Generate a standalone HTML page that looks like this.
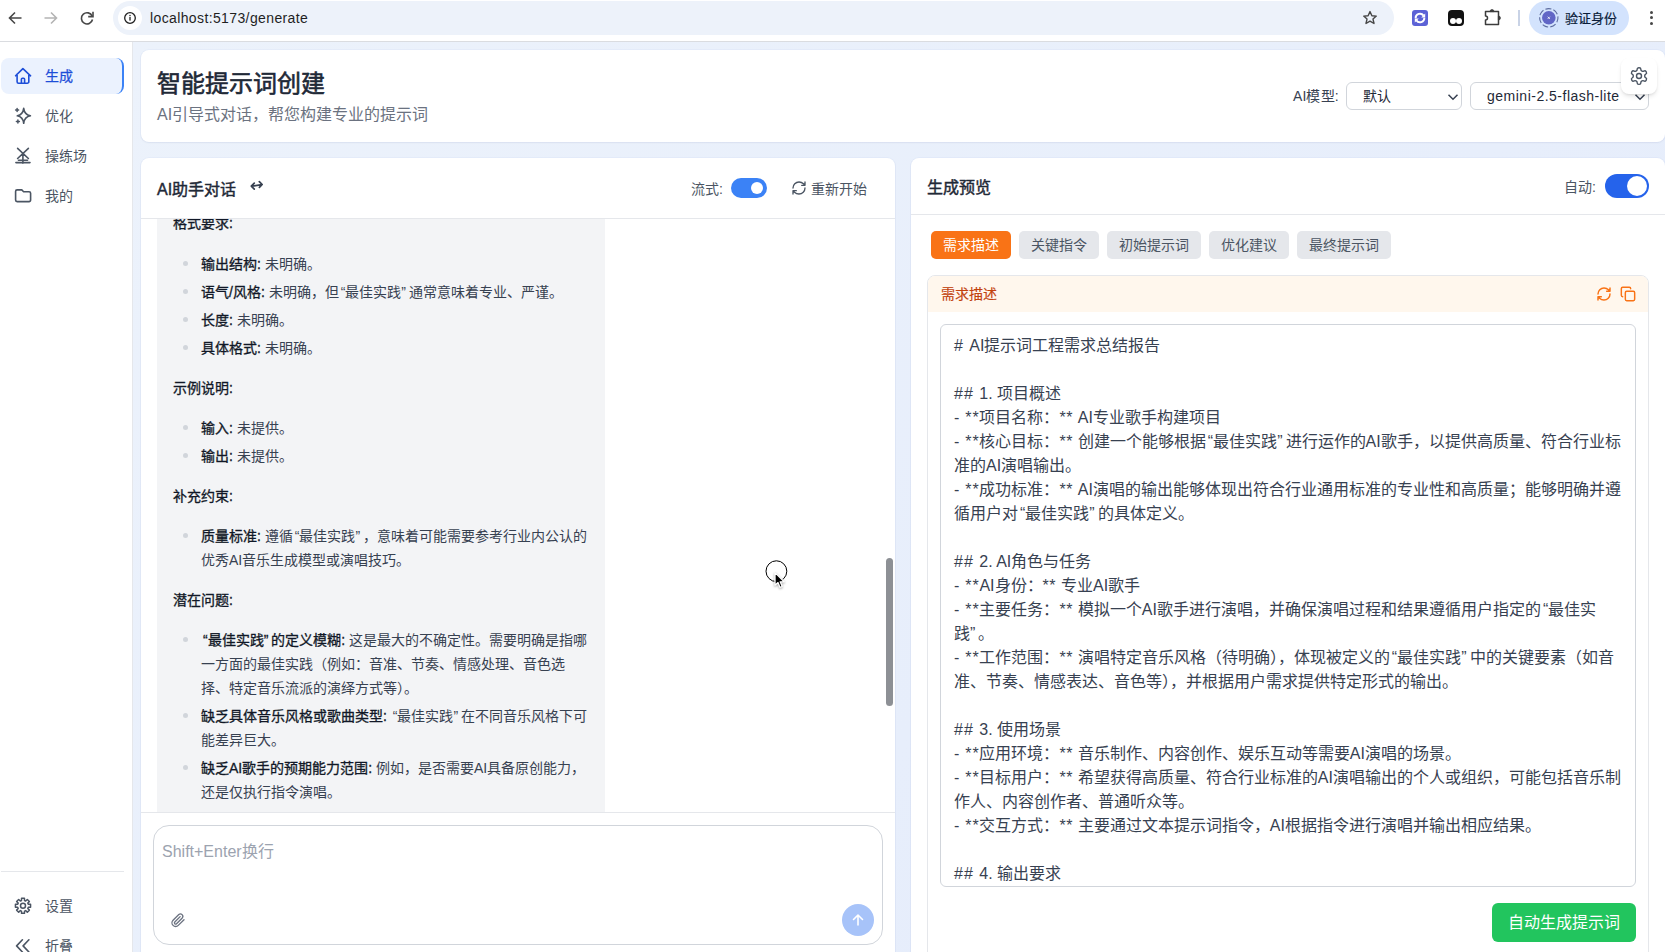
<!DOCTYPE html>
<html lang="zh-CN">
<head>
<meta charset="utf-8">
<style>
*{box-sizing:border-box;margin:0;padding:0}
html,body{width:1665px;height:952px;overflow:hidden;background:#fff}
body{font-family:"Liberation Sans",sans-serif;color:#1f2937;position:relative}
.a{position:absolute}
svg{display:block;position:absolute;overflow:visible}
/* chrome */
#chrome{position:absolute;left:0;top:0;width:1665px;height:42px;background:#fff;border-bottom:1px solid #dadce0}
#url{position:absolute;left:113px;top:1px;width:1281px;height:34px;border-radius:17px;background:#edf2fa}
#urltxt{position:absolute;left:150px;top:9px;font-size:14px;color:#1f1f1f;line-height:18px;white-space:nowrap;letter-spacing:0.38px}
#prof{position:absolute;left:1529px;top:1px;width:100px;height:34px;border-radius:17px;background:#d3e3fd}
/* sidebar */
#side{position:absolute;left:0;top:42px;width:133px;height:910px;background:#fff;border-right:1px solid #e5e7eb}
.nav{position:absolute;left:1px;width:123px;height:36px;border-radius:8px;font-size:14px;color:#4b5563;line-height:36px}
.nav .t{position:absolute;left:44px;top:0}
.nav svg{left:14px;top:10px}
.nav.act{background:#ebf2fe;color:#1d4ed8;border-right:2px solid #3b82f6;-webkit-text-stroke:0.25px #1d4ed8}
/* main */
#main{position:absolute;left:133px;top:42px;width:1532px;height:910px;background:linear-gradient(135deg,#ecf2fb 0%,#e7eefb 60%,#e4ebfb 100%)}
.card{position:absolute;background:#fff;border-radius:8px;box-shadow:0 1px 2px rgba(30,41,59,.05),0 0 0 1px rgba(96,130,210,.05)}
.sel{position:absolute;height:28px;border:1px solid #d1d5db;border-radius:6px;background:#fff;font-size:14px;color:#1f2937;line-height:27px}
.tog{position:absolute;border-radius:999px}
.tog i{position:absolute;background:#fff;border-radius:50%}
.ln{position:absolute;white-space:nowrap;line-height:24px;height:24px}
.bub .ln{font-size:14px;color:#374151}
.bub b{color:#111827;font-weight:400;-webkit-text-stroke:0.3px #111827}
.dot{position:absolute;width:5px;height:5px;border-radius:50%;background:#d1d5db}
.tab{position:absolute;top:231px;height:28px;border-radius:5px;background:#e5e7eb;color:#4b5563;font-size:14px;line-height:27px;padding-top:1px;text-align:center}
.ta .ln{font-size:16px;color:#374151;left:13px;margin-top:1px}
.l1{letter-spacing:0.8px}.l2{letter-spacing:0.5px}.l3{letter-spacing:1px}.ql{margin-left:2px}.qr{margin-right:3px}
</style>
</head>
<body>
<div id="chrome">
  <!-- back -->
  <svg style="left:7px;top:10px" width="16" height="16" viewBox="0 0 16 16"><path d="M14.5 8H2.5M8 2.5L2.5 8L8 13.5" fill="none" stroke="#474747" stroke-width="1.6"/></svg>
  <svg style="left:43px;top:10px" width="16" height="16" viewBox="0 0 16 16"><path d="M1.5 8H13.5M8 2.5L13.5 8L8 13.5" fill="none" stroke="#b4b4b4" stroke-width="1.6"/></svg>
  <svg style="left:79px;top:10px" width="16" height="16" viewBox="0 0 16 16"><path d="M13.2 6.2A5.6 5.6 0 1 0 13.5 9.5" fill="none" stroke="#474747" stroke-width="1.6"/><path d="M14 1.8V6.6H9.2" fill="none" stroke="#474747" stroke-width="1.6"/></svg>
  <div id="url"></div>
  <div class="a" style="left:118px;top:6px;width:24px;height:24px;border-radius:50%;background:#fff"></div>
  <svg style="left:124px;top:12px" width="12" height="12" viewBox="0 0 12 12"><circle cx="6" cy="6" r="5.3" fill="none" stroke="#1f1f1f" stroke-width="1.3"/><rect x="5.35" y="5" width="1.3" height="3.6" fill="#1f1f1f"/><rect x="5.35" y="2.9" width="1.3" height="1.3" fill="#1f1f1f"/></svg>
  <div id="urltxt">localhost:5173/generate</div>
  <svg style="left:1362px;top:10px" width="16" height="16" viewBox="0 0 16 16"><path d="M8 1.6L9.9 5.7L14.3 6.1L11 9.1L12 13.5L8 11.2L4 13.5L5 9.1L1.7 6.1L6.1 5.7Z" fill="none" stroke="#474747" stroke-width="1.4" stroke-linejoin="round"/></svg>
  <!-- ext icons -->
  <div class="a" style="left:1412px;top:10px;width:16px;height:16px;border-radius:3px;background:#5c62d6"></div>
  <svg style="left:1412px;top:10px" width="16" height="16" viewBox="0 0 16 16"><path d="M3.6 8.2A4.4 4.4 0 0 1 11.6 5.6M12.4 7.8A4.4 4.4 0 0 1 4.4 10.4" fill="none" stroke="#fff" stroke-width="1.9"/><path d="M13.2 3.4V7.4H9.2Z M2.8 12.6V8.6H6.8Z" fill="#fff"/></svg>
  <div class="a" style="left:1448px;top:10px;width:16px;height:16px;border-radius:4px;background:#111"></div>
  <div class="a" style="left:1449.5px;top:18.4px;width:6px;height:6px;border-radius:50%;background:#fff"></div>
  <div class="a" style="left:1456.3px;top:18.4px;width:6px;height:6px;border-radius:50%;background:#fff"></div>
  <svg style="left:1482px;top:8px" width="20" height="20" viewBox="0 0 20 20"><path d="M3.5 3.5H16.5V16.5H3.5V12A2 2 0 0 0 3.5 8Z" fill="none" stroke="#3c3c3c" stroke-width="1.5" stroke-linejoin="round"/><path d="M8 3.6A2 2 0 0 1 12 3.6Z M16.4 8A2 2 0 0 1 16.4 12Z" fill="#3c3c3c" stroke="#3c3c3c" stroke-width="0.8"/></svg>
  <div class="a" style="left:1518px;top:10px;width:1.5px;height:16px;background:#c9d3e6"></div>
  <div id="prof"></div>
  <svg style="left:1539px;top:8px" width="20" height="20" viewBox="0 0 20 20"><circle cx="9.8" cy="9.8" r="9.2" fill="none" stroke="#5c6b9e" stroke-width="1.1" stroke-dasharray="6 2.2" transform="rotate(-60 9.8 9.8)"/><circle cx="9.8" cy="9.8" r="6.8" fill="#6166c6"/><path d="M8.7 8.7L10.9 10.9M10.9 8.7L8.7 10.9" stroke="#fff" stroke-width=".8"/></svg>
  <div class="a" style="left:1565px;top:9.5px;font-size:13px;line-height:18px;color:#0b1d3a;-webkit-text-stroke:0.2px #0b1d3a">验证身份</div>
  <div class="a" style="left:1649.5px;top:10.7px;width:3px;height:3px;border-radius:50%;background:#474747"></div><div class="a" style="left:1649.5px;top:16.4px;width:3px;height:3px;border-radius:50%;background:#474747"></div><div class="a" style="left:1649.5px;top:22.1px;width:3px;height:3px;border-radius:50%;background:#474747"></div>
</div>
<div id="side">
  <div class="nav act" style="top:16px">
    <span class="t">生成</span></div>
  <div class="nav" style="top:56px">
    <span class="t">优化</span></div>
  <div class="nav" style="top:96px">
    <span class="t">操练场</span></div>
  <div class="nav" style="top:136px">
    <span class="t">我的</span></div>
  <div class="a" style="left:1px;top:829px;width:123px;height:1px;background:#e5e7eb"></div>
  <div class="nav" style="top:846px">
    <span class="t">设置</span></div>
  <div class="nav" style="top:886px">
    <span class="t">折叠</span></div>
</div>
<svg style="left:0;top:0;z-index:5" width="140" height="952" viewBox="0 0 140 952">
<g fill="none" stroke-width="1.6" stroke-linecap="round" stroke-linejoin="round">
<path stroke="#1d4ed8" d="M15.6 75.8 L22.9 68.6 L30.6 75.8 M17.1 74 V81.7 A1.5 1.5 0 0 0 18.6 83.2 H27.3 A1.5 1.5 0 0 0 28.8 81.7 V74 M21.4 83.2 V79.3 A1 1 0 0 1 22.4 78.3 H23.6 A1 1 0 0 1 24.6 79.3 V83.2"/>
<path stroke="#4b5563" d="M23.7 108.4 Q24.5 114.8 30.4 115.8 Q24.5 116.8 23.7 123.3 Q22.9 116.8 17.3 115.8 Q22.9 114.8 23.7 108.4Z"/>
<path stroke="#4b5563" stroke-width="1.5" d="M17.1 108.6 V111.6 M15.6 110.1 H18.6 M17.9 120.1 V123.1 M16.4 121.6 H19.4"/>
<path stroke="#4b5563" d="M17.6 148.3 L28.4 158.5 M28.4 148.3 L17.6 158.5 M22.9 153.2 V163.2 M18.5 160.2 H27.5 M15.9 162.6 H30"/>
<path stroke="#4b5563" d="M15.6 191.4 A1.5 1.5 0 0 1 17.1 189.9 H21.8 L23.6 191.7 H29.1 A1.5 1.5 0 0 1 30.6 193.2 V200.1 A1.5 1.5 0 0 1 29.1 201.6 H17.1 A1.5 1.5 0 0 1 15.6 200.1 Z"/>
<path stroke="#4b5563" stroke-width="1.5" d="M21.48 900.51 L21.55 898.24 L24.45 898.24 L24.52 900.51 L25.66 900.99 L27.32 899.42 L29.38 901.48 L27.81 903.14 L28.29 904.28 L30.56 904.35 L30.56 907.25 L28.29 907.32 L27.81 908.46 L29.38 910.12 L27.32 912.18 L25.66 910.61 L24.52 911.09 L24.45 913.36 L21.55 913.36 L21.48 911.09 L20.34 910.61 L18.68 912.18 L16.62 910.12 L18.19 908.46 L17.71 907.32 L15.44 907.25 L15.44 904.35 L17.71 904.28 L18.19 903.14 L16.62 901.48 L18.68 899.42 L20.34 900.99Z"/>
<circle stroke="#4b5563" stroke-width="1.5" cx="23" cy="905.8" r="2.5"/>
<path stroke="#4b5563" d="M22.4 939.8 L16.6 945.9 L22.4 952 M28.9 939.8 L23.1 945.9 L28.9 952"/>
</g></svg>
<div id="main"></div>
<!-- header card -->
<div class="card" style="left:141px;top:50px;width:1524px;height:92px"></div>
<div class="a semi" style="left:157px;top:68px;font-size:24px;line-height:32px;color:#1f2937;-webkit-text-stroke:0.6px #1f2937">智能提示词创建</div>
<div class="a" style="left:157px;top:104px;font-size:16px;line-height:22px;color:#6b7280">AI引导式对话，帮您构建专业的提示词</div>
<div class="a" style="left:1293px;top:86px;font-size:14px;line-height:20px;color:#374151;letter-spacing:0.1px">AI模型:</div>
<div class="sel" style="left:1346px;top:82px;width:116px"><span class="a" style="left:16px;top:0">默认</span>
  <svg style="left:100px;top:10px" width="12" height="8" viewBox="0 0 12 8"><path d="M1.5 1.8L6 6.2L10.5 1.8" fill="none" stroke="#374151" stroke-width="1.5"/></svg></div>
<div class="sel" style="left:1470px;top:82px;width:179px"><span class="a" style="left:16px;top:0;letter-spacing:0.5px">gemini-2.5-flash-lite</span>
  <svg style="left:163px;top:10px" width="12" height="8" viewBox="0 0 12 8"><path d="M1.5 1.8L6 6.2L10.5 1.8" fill="none" stroke="#374151" stroke-width="1.5"/></svg></div>
<div class="a" style="left:1621px;top:58px;width:36px;height:36px;border-radius:8px;background:#fff;box-shadow:0 3px 5px -1px rgba(0,0,0,.12),0 1px 2px rgba(0,0,0,.05)"></div>
<svg style="left:1629px;top:66px" width="20" height="20" viewBox="0 0 24 24"><path d="M12.22 2h-.44a2 2 0 0 0-2 2v.18a2 2 0 0 1-1 1.73l-.43.25a2 2 0 0 1-2 0l-.15-.08a2 2 0 0 0-2.730.73l-.22.38a2 2 0 0 0 .73 2.73l.15.1a2 2 0 0 1 1 1.72v.51a2 2 0 0 1-1 1.74l-.15.09a2 2 0 0 0-.73 2.73l.22.38a2 2 0 0 0 2.73.73l.15-.08a2 2 0 0 1 2 0l.43.25a2 2 0 0 1 1 1.73V20a2 2 0 0 0 2 2h.44a2 2 0 0 0 2-2v-.18a2 2 0 0 1 1-1.730l.43-.25a2 2 0 0 1 2 0l.15.08a2 2 0 0 0 2.73-.73l.22-.39a2 2 0 0 0-.73-2.73l-.15-.08a2 2 0 0 1-1-1.74v-.5a2 2 0 0 1 1-1.74l.15-.09a2 2 0 0 0 .73-2.73l-.22-.38a2 2 0 0 0-2.73-.73l-.15.08a2 2 0 0 1-2 0l-.43-.25a2 2 0 0 1-1-1.73V4a2 2 0 0 0-2-2z" fill="none" stroke="#4b5563" stroke-width="1.7" stroke-linejoin="round"/><circle cx="12" cy="12" r="3" fill="none" stroke="#4b5563" stroke-width="1.7"/></svg>

<!-- left card -->
<div class="card" style="left:141px;top:158px;width:754px;height:820px;overflow:hidden">
  <div class="a" style="left:0;top:0;width:754px;height:61px;border-bottom:1px solid #e5e7eb"></div>
  <div class="a" style="left:16px;top:21px;font-size:16px;line-height:22px;color:#1f2937;-webkit-text-stroke:0.45px #1f2937">AI助手对话</div>
  <svg style="left:103px;top:17px" width="26" height="22" viewBox="0 0 26 22"><path d="M8 11.2L18 9.6M10.3 8.1L7.3 11.1L10.3 14.1M15.3 6.6L18.2 9.5L15.4 12.4" fill="none" stroke="#374151" stroke-width="1.7" stroke-linecap="round" stroke-linejoin="round"/></svg>
  <div class="a" style="left:550px;top:21px;font-size:14px;line-height:20px;color:#4b5563">流式:</div>
  <div class="tog" style="left:590px;top:20px;width:36px;height:20px;background:#3b82f6"><i style="left:20px;top:4px;width:12px;height:12px"></i></div>
  <svg style="left:650px;top:22px" width="16" height="16" viewBox="0 0 24 24"><path d="M3 12a9 9 0 0 1 9-9 9.75 9.75 0 0 1 6.74 2.74L21 8M21 3v5h-5M21 12a9 9 0 0 1-9 9 9.75 9.75 0 0 1-6.74-2.74L3 16M8 16H3v5" fill="none" stroke="#4b5563" stroke-width="2" stroke-linecap="round" stroke-linejoin="round"/></svg>
  <div class="a" style="left:670px;top:20.5px;font-size:14px;line-height:20px;color:#4b5563">重新开始</div>
  <!-- scroll area -->
  <div class="a bub" style="left:0;top:61px;width:754px;height:593px;overflow:hidden">
    <div class="a" style="left:16px;top:-40px;width:448px;height:700px;background:#f3f4f6;border-radius:8px"></div>
    <div class="ln" style="left:32px;top:-8px"><b>格式要求:</b></div>
    <div class="dot" style="left:42px;top:42px"></div><div class="ln" style="left:60px;top:33px"><b>输出结构:</b> 未明确。</div>
    <div class="dot" style="left:42px;top:70px"></div><div class="ln" style="left:60px;top:61px"><b>语气/风格:</b> 未明确，但<span class="ql">“</span>最佳实践<span class="qr">”</span>通常意味着专业、严谨。</div>
    <div class="dot" style="left:42px;top:98px"></div><div class="ln" style="left:60px;top:89px"><b>长度:</b> 未明确。</div>
    <div class="dot" style="left:42px;top:126px"></div><div class="ln" style="left:60px;top:117px"><b>具体格式:</b> 未明确。</div>
    <div class="ln" style="left:32px;top:157px"><b>示例说明:</b></div>
    <div class="dot" style="left:42px;top:206px"></div><div class="ln" style="left:60px;top:197px"><b>输入:</b> 未提供。</div>
    <div class="dot" style="left:42px;top:234px"></div><div class="ln" style="left:60px;top:225px"><b>输出:</b> 未提供。</div>
    <div class="ln" style="left:32px;top:265px"><b>补充约束:</b></div>
    <div class="dot" style="left:42px;top:314px"></div><div class="ln" style="left:60px;top:305px"><b>质量标准:</b> 遵循<span class="ql">“</span>最佳实践<span class="qr">”</span>，意味着可能需要参考行业内公认的</div>
    <div class="ln" style="left:60px;top:329px">优秀AI音乐生成模型或演唱技巧。</div>
    <div class="ln" style="left:32px;top:369px"><b>潜在问题:</b></div>
    <div class="dot" style="left:42px;top:418px"></div><div class="ln" style="left:60px;top:409px"><b><span class="ql">“</span>最佳实践<span class="qr">”</span>的定义模糊:</b> 这是最大的不确定性。需要明确是指哪</div>
    <div class="ln" style="left:60px;top:433px">一方面的最佳实践（例如：音准、节奏、情感处理、音色选</div>
    <div class="ln" style="left:60px;top:457px">择、特定音乐流派的演绎方式等）。</div>
    <div class="dot" style="left:42px;top:494px"></div><div class="ln" style="left:60px;top:485px"><b>缺乏具体音乐风格或歌曲类型:</b> <span class="ql">“</span>最佳实践<span class="qr">”</span>在不同音乐风格下可</div>
    <div class="ln" style="left:60px;top:509px">能差异巨大。</div>
    <div class="dot" style="left:42px;top:546px"></div><div class="ln" style="left:60px;top:537px"><b>缺乏AI歌手的预期能力范围:</b> 例如，是否需要AI具备原创能力，</div>
    <div class="ln" style="left:60px;top:561px">还是仅执行指令演唱。</div>
    <!-- scrollbar -->
    <div class="a" style="left:745px;top:339px;width:7px;height:148px;border-radius:4px;background:#8d9095"></div>
  </div>
  <div class="a" style="left:0;top:654px;width:754px;height:1px;background:#e5e7eb"></div>
  <div class="a" style="left:12px;top:667px;width:730px;height:120px;border:1px solid #d1d5db;border-radius:16px;background:#fff"></div>
  <div class="a" style="left:21px;top:683px;font-size:16px;line-height:22px;color:#9ca3af">Shift+Enter换行</div>
  <svg style="left:29px;top:754px" width="16" height="16" viewBox="0 0 24 24"><path d="M21 11.5l-8.6 8.6a5.5 5.5 0 0 1-7.8-7.8l8.6-8.6a3.7 3.7 0 0 1 5.2 5.2l-8.6 8.6a1.8 1.8 0 0 1-2.6-2.6l8-8" fill="none" stroke="#6b7280" stroke-width="2" stroke-linecap="round"/></svg>
  <div class="a" style="left:701px;top:746px;width:32px;height:32px;border-radius:50%;background:#a7c3f9"></div>
  <svg style="left:710px;top:755px" width="14" height="14" viewBox="0 0 14 14"><path d="M7 12V2M2.5 6.5L7 2l4.5 4.5" fill="none" stroke="#fff" stroke-width="1.6" stroke-linecap="round" stroke-linejoin="round"/></svg>
</div>
<!-- cursor -->
<svg style="left:755px;top:555px;z-index:6" width="40" height="40" viewBox="755 555 40 40"><circle cx="776.4" cy="571.2" r="10.4" fill="none" stroke="#000" stroke-width="1"/><path d="M775 572.6V585.2L778 582.6L780 587.4L782.2 586.4L780.2 581.8H784.2Z" fill="#000" stroke="#fff" stroke-width="1.3" stroke-linejoin="round" style="filter:drop-shadow(0.5px 1px 0.8px rgba(0,0,0,.35))"/></svg>
<!-- right card -->
<div class="card" style="left:911px;top:158px;width:754px;height:820px;overflow:hidden">
  <div class="a" style="left:0;top:0;width:754px;height:57px;border-bottom:1px solid #e5e7eb"></div>
  <div class="a" style="left:16px;top:19px;font-size:16px;line-height:22px;color:#1f2937;-webkit-text-stroke:0.45px #1f2937">生成预览</div>
  <div class="a" style="left:653px;top:19px;font-size:14px;line-height:20px;color:#4b5563">自动:</div>
  <div class="tog" style="left:694px;top:16px;width:44px;height:24px;background:#2563eb"><i style="left:22px;top:2px;width:20px;height:20px"></i></div>
</div>
<div class="tab" style="left:931px;width:80px;background:#f97316;color:#fff">需求描述</div>
<div class="tab" style="left:1019px;width:80px">关键指令</div>
<div class="tab" style="left:1107px;width:94px">初始提示词</div>
<div class="tab" style="left:1209px;width:80px">优化建议</div>
<div class="tab" style="left:1297px;width:94px">最终提示词</div>
<!-- section card -->
<div class="a" style="left:927px;top:275px;width:722px;height:700px;border:1px solid #e5e7eb;border-radius:8px;overflow:hidden;background:#fff">
  <div class="a" style="left:0;top:0;width:720px;height:36px;background:#fff7ed"></div>
  <div class="a" style="left:13px;top:8px;font-size:14px;line-height:20px;color:#c2410c;-webkit-text-stroke:0.15px #c2410c">需求描述</div>
  <svg style="left:668px;top:10px" width="16" height="16" viewBox="0 0 24 24"><path d="M3 12a9 9 0 0 1 9-9 9.75 9.75 0 0 1 6.74 2.74L21 8M21 3v5h-5M21 12a9 9 0 0 1-9 9 9.75 9.75 0 0 1-6.74-2.74L3 16M8 16H3v5" fill="none" stroke="#f97316" stroke-width="2.2" stroke-linecap="round" stroke-linejoin="round"/></svg>
  <svg style="left:692px;top:10px" width="16" height="16" viewBox="0 0 24 24"><rect width="14" height="14" x="8" y="8" rx="2" fill="none" stroke="#f97316" stroke-width="2.2"/><path d="M4 16c-1.1 0-2-.9-2-2V4c0-1.1.9-2 2-2h10c1.1 0 2 .9 2 2" fill="none" stroke="#f97316" stroke-width="2.2" stroke-linecap="round"/></svg>
  <div class="a ta" style="left:12px;top:48px;width:696px;height:563px;border:1px solid #d1d5db;border-radius:6px;overflow:hidden;background:#fff">
    <div class="ln" style="top:8px"><span class="l3"># </span>AI提示词工程需求总结报告</div>
    <div class="ln" style="top:56px"><span class="l3">## </span>1. 项目概述</div>
    <div class="ln" style="top:80px"><span class="l1">- **</span>项目名称：<span class="l2">** </span>AI专业歌手构建项目</div>
    <div class="ln" style="top:104px"><span class="l1">- **</span>核心目标：<span class="l2">** </span>创建一个能够根据<span class="ql">“</span>最佳实践<span class="qr">”</span>进行运作的AI歌手，以提供高质量、符合行业标</div>
    <div class="ln" style="top:128px">准的AI演唱输出。</div>
    <div class="ln" style="top:152px"><span class="l1">- **</span>成功标准：<span class="l2">** </span>AI演唱的输出能够体现出符合行业通用标准的专业性和高质量；能够明确并遵</div>
    <div class="ln" style="top:176px">循用户对<span class="ql">“</span>最佳实践<span class="qr">”</span>的具体定义。</div>
    <div class="ln" style="top:224px"><span class="l3">## </span>2. AI角色与任务</div>
    <div class="ln" style="top:248px"><span class="l1">- **</span>AI身份：<span class="l2">** </span>专业AI歌手</div>
    <div class="ln" style="top:272px"><span class="l1">- **</span>主要任务：<span class="l2">** </span>模拟一个AI歌手进行演唱，并确保演唱过程和结果遵循用户指定的<span class="ql">“</span>最佳实</div>
    <div class="ln" style="top:296px">践<span class="qr">”</span>。</div>
    <div class="ln" style="top:320px"><span class="l1">- **</span>工作范围：<span class="l2">** </span>演唱特定音乐风格（待明确），体现被定义的<span class="ql">“</span>最佳实践<span class="qr">”</span>中的关键要素（如音</div>
    <div class="ln" style="top:344px">准、节奏、情感表达、音色等），并根据用户需求提供特定形式的输出。</div>
    <div class="ln" style="top:392px"><span class="l3">## </span>3. 使用场景</div>
    <div class="ln" style="top:416px"><span class="l1">- **</span>应用环境：<span class="l2">** </span>音乐制作、内容创作、娱乐互动等需要AI演唱的场景。</div>
    <div class="ln" style="top:440px"><span class="l1">- **</span>目标用户：<span class="l2">** </span>希望获得高质量、符合行业标准的AI演唱输出的个人或组织，可能包括音乐制</div>
    <div class="ln" style="top:464px">作人、内容创作者、普通听众等。</div>
    <div class="ln" style="top:488px"><span class="l1">- **</span>交互方式：<span class="l2">** </span>主要通过文本提示词指令，AI根据指令进行演唱并输出相应结果。</div>
    <div class="ln" style="top:536px"><span class="l3">## </span>4. 输出要求</div>
  </div>
  <div class="a" style="left:564px;top:627px;width:144px;height:39px;border-radius:6px;background:#22c55e;color:#fff;font-size:16px;line-height:39px;text-align:center">自动生成提示词</div>
</div>


</body>
</html>
